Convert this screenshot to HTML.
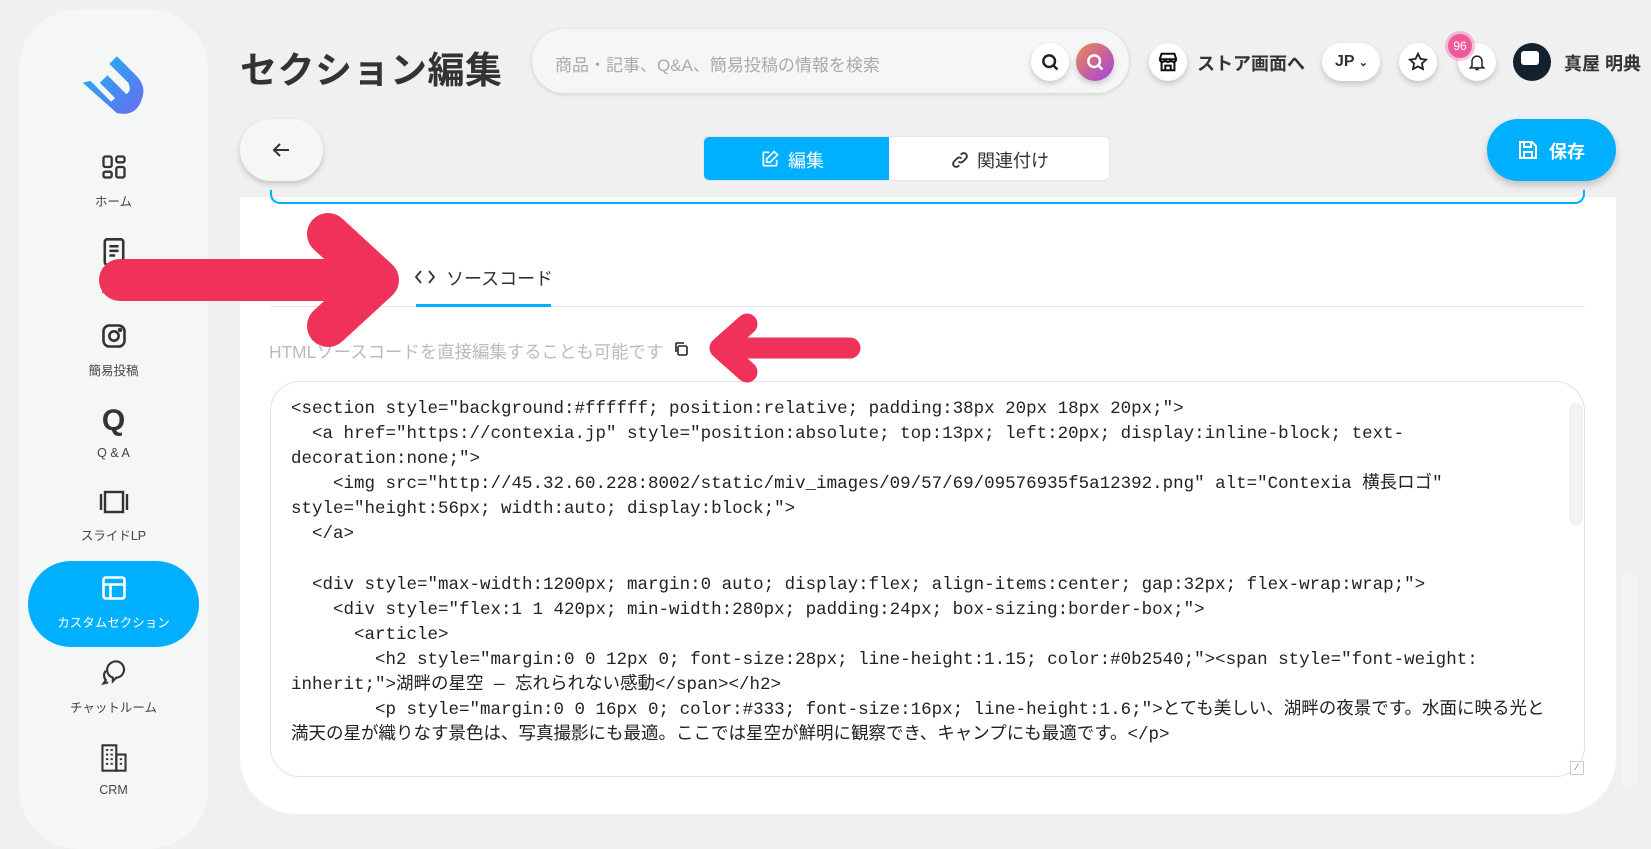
<!DOCTYPE html>
<html><head><meta charset="utf-8">
<style>
*{box-sizing:border-box;margin:0;padding:0}
body{width:1651px;height:827px;overflow:hidden;background:#f0f0f0;font-family:"Liberation Sans","Noto Sans CJK JP",sans-serif;position:relative;color:#333}
.abs{position:absolute}
.side{left:19px;top:9px;width:189px;height:840px;background:#f5f6f6;border-radius:60px}
.nav{position:absolute;left:19px;width:189px;text-align:center;font-size:12.5px;color:#444}
.nav svg{display:block;margin:0 auto}
.circ{position:absolute;background:#fff;border-radius:50%;box-shadow:0 3px 6px rgba(0,0,0,.18);display:flex;align-items:center;justify-content:center}
.code{position:absolute;left:291px;top:397px;font-family:"Liberation Mono","Noto Sans CJK JP",monospace;font-size:17.5px;line-height:25.1px;color:#222;white-space:pre}
</style></head><body>
<div class="abs side"></div>
<!-- logo -->
<svg class="abs" style="left:79px;top:44px" width="72" height="70" viewBox="0 0 76 72">
<defs><linearGradient id="lg" x1="0" y1="0" x2="1" y2="1"><stop offset="0" stop-color="#1ab4f5"/><stop offset="1" stop-color="#6a6cf0"/></linearGradient></defs>
<path d="M4 40 L40 72 Q60 76 66 58 Q72 44 60 32 L40 12 L32 20 L52 40 Q56 48 50 52 L44 46 L30 32 L22 40 L38 56 L34 60 L12 38 Z" fill="url(#lg)"/>
</svg>
<div class="nav" style="top:153px"><svg width="28" height="28" viewBox="0 0 24 24" fill="none" stroke="#333" stroke-width="2"><rect x="3" y="3" width="7" height="9" rx="1.5"/><rect x="14" y="3" width="7" height="5" rx="1.5"/><rect x="14" y="12" width="7" height="9" rx="1.5"/><rect x="3" y="16" width="7" height="5" rx="1.5"/></svg><div style="margin-top:10px">ホーム</div></div>
<div class="nav" style="top:237px"><svg width="28" height="30" viewBox="0 0 24 26" fill="none" stroke="#333" stroke-width="2.2"><rect x="4" y="2" width="16" height="22" rx="2"/><path d="M8 8h8M8 12h8M8 16h5"/></svg><div style="margin-top:10px">商品</div></div>
<div class="nav" style="top:322px"><svg width="28" height="28" viewBox="0 0 24 24" fill="none" stroke="#333" stroke-width="2.2"><rect x="3" y="3" width="18" height="18" rx="5"/><circle cx="12" cy="12" r="4"/><circle cx="17.2" cy="6.8" r=".8" fill="#333"/></svg><div style="margin-top:10px">簡易投稿</div></div>
<div class="nav" style="top:406px"><div style="font-size:30px;font-weight:bold;color:#333;line-height:30px">Q</div><div style="margin-top:10px">Q &amp; A</div></div>
<div class="nav" style="top:489px"><svg width="30" height="26" viewBox="0 0 30 26" fill="none" stroke="#333" stroke-width="2.4"><rect x="6" y="3" width="18" height="20"/><path d="M2 5v16M28 5v16"/></svg><div style="margin-top:10px">スライドLP</div></div>
<div class="abs" style="left:28px;top:561px;width:171px;height:86px;background:#00b0ff;border-radius:43px"></div>
<div class="nav" style="top:574px;color:#fff"><svg width="28" height="28" viewBox="0 0 24 24" fill="none" stroke="#fff" stroke-width="2.2"><rect x="3" y="3" width="18" height="18" rx="2"/><path d="M3 9h18M9 9v12"/></svg><div style="margin-top:10px">カスタムセクション</div></div>
<div class="nav" style="top:659px"><svg width="30" height="28" viewBox="0 0 24 24" fill="none" stroke="#333" stroke-width="1.8"><path d="M10 3a7 7 0 1 1 4 13l-3 3v-3a7 7 0 0 1-1-13z"/><path d="M5 10a6 6 0 0 0 0 8l-2 3 4-1"/></svg><div style="margin-top:10px">チャットルーム</div></div>
<div class="nav" style="top:743px"><svg width="28" height="30" viewBox="0 0 24 26" fill="none" stroke="#333" stroke-width="1.8"><rect x="2" y="2" width="12" height="22"/><rect x="14" y="10" width="8" height="14"/><path d="M5 6h2M9 6h2M5 10h2M9 10h2M5 14h2M9 14h2M5 18h2M9 18h2M17 14h2M17 18h2" stroke-width="1.6"/></svg><div style="margin-top:10px">CRM</div></div>

<!-- header -->
<div class="abs" style="left:240px;top:40px;font-size:37px;font-weight:bold;color:#333;letter-spacing:.5px">セクション編集</div>
<div class="abs" style="left:532px;top:29px;width:597px;height:64px;background:#f5f6f6;border-radius:32px;box-shadow:0 1px 4px rgba(0,0,0,.15)"></div>
<div class="abs" style="left:555px;top:51px;font-size:17px;color:#aaa">商品・記事、Q&amp;A、簡易投稿の情報を検索</div>
<div class="circ" style="left:1031px;top:43px;width:38px;height:38px"><svg width="20" height="20" viewBox="0 0 24 24" fill="none" stroke="#222" stroke-width="3"><circle cx="11" cy="11" r="7"/><path d="M16 16l5 5"/></svg></div>
<div class="circ" style="left:1076px;top:43px;width:38px;height:38px;background:linear-gradient(135deg,#f08a50,#a040e0)"><svg width="20" height="20" viewBox="0 0 24 24" fill="none" stroke="#fff" stroke-width="3"><circle cx="11" cy="11" r="7"/><path d="M16 16l5 5"/></svg></div>
<div class="circ" style="left:1149px;top:43px;width:38px;height:38px"><svg width="22" height="22" viewBox="0 0 24 24" fill="none" stroke="#111" stroke-width="2.2"><path d="M3 9l2-6h14l2 6M3 9h18M3 9c0 2 2 3 3 3s3-1 3-3c0 2 1 3 3 3s3-1 3-3c0 2 2 3 3 3s3-1 3-3M5 12v9h14v-9M9 21v-5h6v5"/></svg></div>
<div class="abs" style="left:1197px;top:50px;font-size:18px;font-weight:bold;color:#333">ストア画面へ</div>
<div class="abs" style="left:1322px;top:43px;width:58px;height:38px;background:#fff;border-radius:19px;box-shadow:0 3px 6px rgba(0,0,0,.18);font-size:16px;font-weight:bold;padding:10px 0 0 13px">JP <span style="font-size:11px">&#8964;</span></div>
<div class="circ" style="left:1399px;top:43px;width:38px;height:38px"><svg width="22" height="22" viewBox="0 0 24 24" fill="none" stroke="#222" stroke-width="2"><path d="M12 3l2.7 5.6 6.1.8-4.5 4.2 1.1 6.1L12 16.8 6.6 19.7l1.1-6.1L3.2 9.4l6.1-.8z"/></svg></div>
<div class="circ" style="left:1458px;top:43px;width:38px;height:38px"><svg width="20" height="22" viewBox="0 0 24 24" fill="none" stroke="#222" stroke-width="1.8"><path d="M6 17V11a6 6 0 0 1 12 0v6l2 2H4zM10 21h4"/></svg></div>
<div class="abs" style="left:1448px;top:34px;width:24px;height:24px;border-radius:50%;background:#ee5a9c;box-shadow:0 0 0 3px rgba(238,90,156,.35);color:#fff;font-size:12px;text-align:center;line-height:24px">96</div>
<div class="abs" style="left:1513px;top:43px;width:38px;height:38px;border-radius:50%;background:#14202e"><div style="position:absolute;left:8px;top:8px;width:18px;height:14px;background:#fff;border-radius:3px"></div></div>
<div class="abs" style="left:1564px;top:50px;font-size:18px;font-weight:bold;color:#333">真屋 明典</div>

<!-- back / tabs / save -->
<div class="abs" style="left:240px;top:119px;width:83px;height:62px;background:#f5f6f6;border-radius:31px;box-shadow:0 3px 6px rgba(0,0,0,.18)"></div>
<svg class="abs" style="left:269px;top:138px" width="24" height="24" viewBox="0 0 24 24" fill="none" stroke="#333" stroke-width="2"><path d="M20 12H5M11 6l-6 6 6 6"/></svg>
<div class="abs" style="left:703px;top:136px;width:407px;height:45px;background:#fff;border-radius:6px;border:1px solid #e6e6e6;overflow:hidden">
<div style="position:absolute;left:0;top:0;width:185px;height:45px;background:#00b0ff;color:#fff;font-size:18px;padding:10px 0 0 60px"><svg style="position:absolute;left:56px;top:12px" width="20" height="20" viewBox="0 0 24 24" fill="none" stroke="#fff" stroke-width="2"><path d="M11 4H5a1 1 0 0 0-1 1v14a1 1 0 0 0 1 1h14a1 1 0 0 0 1-1v-6M17 3l4 4-9 9H8v-4z"/></svg><span style="margin-left:24px">編集</span></div>
<div style="position:absolute;left:185px;top:0;width:222px;height:45px;font-size:18px;color:#333;padding:10px 0 0 64px"><svg style="position:absolute;left:62px;top:14px" width="18" height="18" viewBox="0 0 24 24" fill="none" stroke="#333" stroke-width="2.5"><path d="M10 14a4 4 0 0 0 6 0l4-4a4 4 0 0 0-6-6l-1 1M14 10a4 4 0 0 0-6 0l-4 4a4 4 0 0 0 6 6l1-1"/></svg><span style="margin-left:24px">関連付け</span></div>
</div>
<div class="abs" style="left:1487px;top:119px;width:129px;height:62px;background:#00b0ff;border-radius:31px;box-shadow:0 4px 8px rgba(0,0,0,.2);color:#fff;font-size:18px;font-weight:bold;padding:19px 0 0 62px">保存</div>
<svg class="abs" style="left:1516px;top:138px" width="24" height="24" viewBox="0 0 24 24" fill="none" stroke="#fff" stroke-width="2"><path d="M4 4h12l4 4v12H4zM8 4v5h7V4M8 20v-6h8v6"/></svg>

<!-- main panel -->
<div class="abs" style="left:240px;top:197px;width:1376px;height:617px;background:#fff;border-radius:0 0 56px 56px"></div>
<div class="abs" style="left:270px;top:190px;width:1315px;height:14px;border:2px solid #00b0ff;border-top:none;border-radius:0 0 10px 10px"></div>
<svg class="abs" style="left:414px;top:268px" width="22" height="18" viewBox="0 0 22 18" fill="none" stroke="#333" stroke-width="1.8"><path d="M7 3L2 9l5 6M15 3l5 6-5 6"/></svg>
<div class="abs" style="left:446px;top:265px;font-size:18px;color:#333">ソースコード</div>
<div class="abs" style="left:270px;top:306px;width:1315px;height:1px;background:#e3e3e3"></div>
<div class="abs" style="left:416px;top:304px;width:135px;height:3px;background:#00b0ff"></div>
<div class="abs" style="left:269px;top:339px;font-size:17.4px;color:#bbb">HTMLソースコードを直接編集することも可能です</div>
<svg class="abs" style="left:673px;top:341px" width="16" height="16" viewBox="0 0 16 16" fill="none" stroke="#222" stroke-width="1.6"><rect x="5" y="5" width="9" height="9" rx="1.5"/><path d="M3 11V3a1 1 0 0 1 1-1h7"/></svg>
<div class="abs" style="left:270px;top:381px;width:1315px;height:396px;border:1px solid #e2e2e2;border-radius:30px"></div>
<div class="abs" style="left:1569px;top:403px;width:14px;height:122px;background:#f2f2f2;border-radius:7px"></div>
<div class="abs" style="left:1570px;top:761px;width:14px;height:14px;border:1px solid #ccc;background:#fff;font-size:9px;color:#666;text-align:center">⁄</div>
<div class="abs" style="left:1622px;top:572px;width:15px;height:216px;background:#f4f4f4;border-radius:7px"></div>
<div class="code">&lt;section style="background:#ffffff; position:relative; padding:38px 20px 18px 20px;"&gt;
  &lt;a href="https://contexia.jp" style="position:absolute; top:13px; left:20px; display:inline-block; text-
decoration:none;"&gt;
    &lt;img src="http://45.32.60.228:8002/static/miv_images/09/57/69/09576935f5a12392.png" alt="Contexia 横長ロゴ"
style="height:56px; width:auto; display:block;"&gt;
  &lt;/a&gt;

  &lt;div style="max-width:1200px; margin:0 auto; display:flex; align-items:center; gap:32px; flex-wrap:wrap;"&gt;
    &lt;div style="flex:1 1 420px; min-width:280px; padding:24px; box-sizing:border-box;"&gt;
      &lt;article&gt;
        &lt;h2 style="margin:0 0 12px 0; font-size:28px; line-height:1.15; color:#0b2540;"&gt;&lt;span style="font-weight:
inherit;"&gt;湖畔の星空 — 忘れられない感動&lt;/span&gt;&lt;/h2&gt;
        &lt;p style="margin:0 0 16px 0; color:#333; font-size:16px; line-height:1.6;"&gt;とても美しい、湖畔の夜景です。水面に映る光と
満天の星が織りなす景色は、写真撮影にも最適。ここでは星空が鮮明に観察でき、キャンプにも最適です。&lt;/p&gt;</div>

<!-- arrows -->
<svg class="abs" style="left:0;top:0" width="1651" height="827" viewBox="0 0 1651 827" fill="none" stroke="#f0325a" stroke-linecap="round" stroke-linejoin="round">
<path d="M120 280H378M328 234L378 280L328 326" stroke-width="42"/>
<path d="M850 348H722M747 324L720 348L747 372" stroke-width="21"/>
</svg>
</body></html>
